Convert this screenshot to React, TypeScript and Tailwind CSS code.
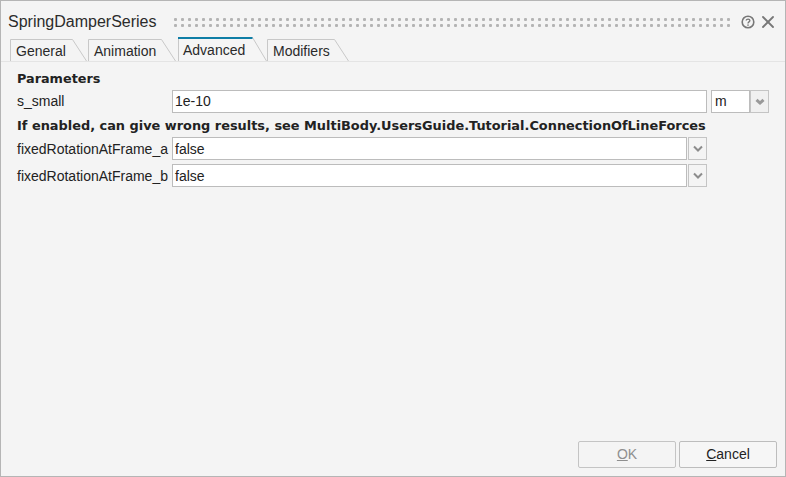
import { X } from "lucide-react";

const font = { fontFamily: '"Liberation Sans", Arial, sans-serif' };
const boldFont = { fontFamily: '"DejaVu Sans", Verdana, sans-serif' };

type TabProps = {
  label: string;
  width: number;
  active?: boolean;
};

function Tab({ label, width, active }: TabProps) {
  const h = active ? 24 : 22;
  const right = width - 0.5;
  const shoulder = right - 14;
  return (
    <div
      className={`relative shrink-0 ${active ? "h-[24px]" : "h-[22px]"}`}
      style={{ width }}
    >
      <svg className="absolute left-0 top-0" width={width} height={h}>
        <path
          d={`M0.5 ${h} V0.5 H${shoulder} L${right} ${h}`}
          fill={active ? "#f5f5f5" : "#f4f4f4"}
          stroke="#c8c8c8"
        />
        {active && <rect x="0" y="0" width={shoulder} height="2" fill="#0f7ea6" />}
      </svg>
      <span
        className={`absolute text-[14px] leading-[16px] text-[#2a2a2a] ${active ? "left-[5px] top-[5px]" : "left-[6px] top-[4px]"}`}
      >
        {label}
      </span>
    </div>
  );
}

function Chevron({ heavy }: { heavy?: boolean }) {
  return (
    <svg width="12" height="8" viewBox="0 0 12 8">
      <path
        d={heavy ? "M2.5 1.8 L6 5 L9.5 1.8" : "M2 1.5 L6 5.5 L10 1.5"}
        fill="none"
        stroke={heavy ? "#999" : "#8c8c8c"}
        strokeWidth={heavy ? 3 : 2}
      />
    </svg>
  );
}

type SelectRowProps = {
  label: string;
  value: string;
};

function SelectRow({ label, value }: SelectRowProps) {
  return (
    <div className="flex h-[23px] items-center">
      <div className="w-[155px] shrink-0 pt-px text-[14px] whitespace-nowrap text-[#222]">{label}</div>
      <div className="flex h-full w-[515px] items-center border border-[#bcbcbc] bg-white pt-px pl-[2px] text-[14px] text-[#222]">
        {value}
      </div>
      <div className="ml-px flex h-full w-[19px] items-center justify-center border border-[#c4c4c4] bg-[#f4f4f4]">
        <Chevron />
      </div>
    </div>
  );
}

export default function App() {
  return (
    <div
      className="flex h-[477px] w-[786px] flex-col overflow-hidden border border-[#b5b5b5] bg-[#f4f4f4]"
      style={font}
    >
      {/* title bar */}
      <div className="flex h-[36px] shrink-0 items-center pl-[7px] pt-[6px]">
        <div className="w-[166px] shrink-0 text-[16px] text-[#2b2b2b]">SpringDamperSeries</div>
        {/* drag handle */}
        <div className="grid shrink-0 grid-flow-col grid-rows-2 gap-x-[4px] gap-y-[3px]">
          {Array.from({ length: 160 }, (_, i) => (
            <span key={i} className="size-[3px] rounded-[1px] bg-[#b4b4b4]" />
          ))}
        </div>
        <svg className="ml-[11px] shrink-0" width="14" height="14" viewBox="0 0 14 14">
          <circle cx="7" cy="7" r="5.8" fill="none" stroke="#777" strokeWidth="1.6" />
          <path d="M5.2 5.6 C5.2 3.6 8.9 3.6 8.9 5.6 C8.9 6.9 7 6.9 7 8.4" fill="none" stroke="#777" strokeWidth="1.3" />
          <rect x="6.3" y="9.4" width="1.4" height="1.4" fill="#777" />
        </svg>
        <X className="ml-[3px] shrink-0 text-[#777]" size={20} strokeWidth={2.2} />
      </div>

      {/* tabs */}
      <div className="flex h-[25px] shrink-0 items-end border-b border-[#e4e4e4] pl-[9px]">
        <Tab label="General" width={77} />
        <div className="w-px shrink-0" />
        <Tab label="Animation" width={88} />
        <div className="w-[2px] shrink-0" />
        <Tab label="Advanced" width={89} active />
        <Tab label="Modifiers" width={82} />
      </div>

      {/* parameters */}
      <div className="flex flex-1 flex-col px-[16px]">
        <div className="mt-[9px] h-[16px] text-[12.8px] font-bold leading-[16px] text-[#222]" style={boldFont}>
          Parameters
        </div>
        <div className="mt-[3px] flex h-[23px] items-center">
          <div className="w-[155px] shrink-0 text-[14px] text-[#222]">s_small</div>
          <div className="flex h-full w-[535px] items-center border border-[#bcbcbc] bg-white pl-[2px] text-[14px] text-[#222]">
            1e-10
          </div>
          <div className="ml-[4px] flex h-full w-[39px] items-center border border-[#bcbcbc] bg-white pl-[3px] text-[14px] text-[#222]">
            m
          </div>
          <div className="flex h-full w-[19px] items-center justify-center border border-[#c4c4c4] bg-[#f0f0f0]">
            <Chevron heavy />
          </div>
        </div>
        <div className="mt-[5px] h-[16px] text-[12.9px] font-bold leading-[16px] whitespace-nowrap text-[#222]" style={boldFont}>
          If enabled, can give wrong results, see MultiBody.UsersGuide.Tutorial.ConnectionOfLineForces
        </div>
        <div className="mt-[3px] flex flex-col gap-[4px]">
          <SelectRow label="fixedRotationAtFrame_a" value="false" />
          <SelectRow label="fixedRotationAtFrame_b" value="false" />
        </div>
      </div>

      {/* footer */}
      <div className="flex shrink-0 justify-end gap-[3px] pr-[8px] pb-[8px]">
        <button className="h-[27px] w-[98px] rounded-[2px] border border-[#c4c4c4] bg-[#f4f4f4] text-[14px] text-[#8f8f8f]">
          <span className="underline">O</span>K
        </button>
        <button className="h-[27px] w-[98px] rounded-[2px] border border-[#bdbdbd] bg-[#f6f6f6] text-[14px] text-[#222]">
          <span className="underline">C</span>ancel
        </button>
      </div>
    </div>
  );
}
